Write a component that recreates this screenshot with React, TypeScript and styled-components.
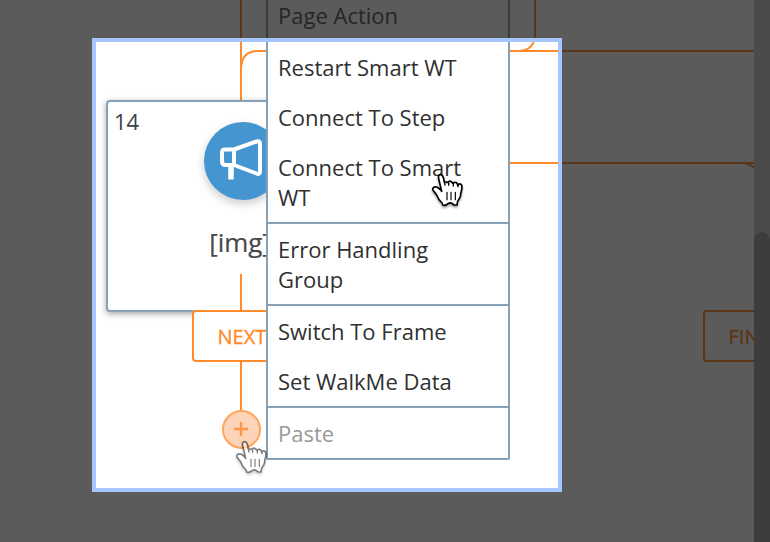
import React from "react";
import styled, { createGlobalStyle } from "styled-components";

const ORANGE = "#ff8b2c";
const STEEL = "#86a1b7";

const GlobalStyle = createGlobalStyle`
  * { box-sizing: border-box; }
  html, body { margin: 0; padding: 0; }
  body { overflow: hidden; font-family: "Open Sans", "Noto Sans", sans-serif; }
`;

const Screen = styled.main`
  position: relative;
  display: grid;
  grid-template-columns: 1fr 16px;
  width: 770px;
  height: 542px;
  overflow: hidden;
  background: #fff;
`;

const Canvas = styled.div`
  position: relative;
  overflow: hidden;
`;

const Connectors = styled.svg`
  position: absolute;
  inset: 0;
  fill: none;
  stroke: ${ORANGE};
  stroke-width: 2;
`;

const StepNode = styled.section`
  position: absolute;
  left: 106px;
  top: 100px;
  width: 274px;
  height: 212px;
  padding: 4px 6px;
  display: flex;
  flex-direction: column;
  align-items: center;
  background: #fff;
  border: 2px solid ${STEEL};
  border-radius: 4px;
  box-shadow: 0 2px 6px rgba(0, 0, 0, 0.35);
`;

const StepNumber = styled.span`
  align-self: flex-start;
  height: 16px;
  font-size: 22px;
  line-height: 30px;
  color: #37424a;
`;

const StepIcon = styled.div`
  flex: none;
  width: 78px;
  height: 78px;
  border-radius: 50%;
  background: #4595d1;
  box-shadow: 0 4px 10px rgba(0, 0, 0, 0.2);
`;

const StepTitle = styled.span`
  margin-top: 24px;
  padding-right: 6px;
  font-size: 26px;
  letter-spacing: -0.1px;
  line-height: 36px;
  color: #484848;
  -webkit-text-stroke: 0.2px #484848;
`;

const Branch = styled.div<{ $x: number; $width: number }>`
  position: absolute;
  left: ${(p) => p.$x}px;
  top: 310px;
  width: ${(p) => p.$width}px;
  height: 52px;
  padding-left: 23.5px;
  display: flex;
  align-items: center;
  background: #fff;
  border: 2px solid ${ORANGE};
  border-radius: 4px;
  color: ${ORANGE};
  font-size: 20px;
  -webkit-text-stroke: 0.35px ${ORANGE};
`;

const AddButton = styled.button`
  position: absolute;
  left: 221.5px;
  top: 409.5px;
  width: 39px;
  height: 39px;
  padding: 0;
  display: grid;
  place-items: center;
  border: 2.5px solid #ffa45b;
  border-radius: 50%;
  background: #fdd4b7;
`;

const Menu = styled.nav`
  position: absolute;
  left: 266px;
  top: -12px;
  width: 244px;
  background: #fff;
  border: 2px solid ${STEEL};
  border-radius: 2px;
`;

const MenuGroup = styled.div`
  & + & { border-top: 2px solid ${STEEL}; }
`;

const MenuItem = styled.div<{ $tone?: string }>`
  padding: 10px;
  font-size: 22px;
  line-height: 30px;
  color: ${(p) => p.$tone ?? "#303030"};
`;

const ScrollTrack = styled.div`
  padding-top: 232px;
  background: #cecece;
`;

const ScrollThumb = styled.div`
  height: 330px;
  border-radius: 8px;
  background: #a3a3a3;
`;

const Spotlight = styled.div`
  position: absolute;
  left: 92px;
  top: 38px;
  width: 470px;
  height: 454px;
  border: 4px solid #a6c6ff;
  box-shadow: 0 0 0 700px rgba(12, 12, 12, 0.675);
`;

const Pointer = styled.svg<{ $x: number; $y: number; $faded?: boolean }>`
  position: absolute;
  left: ${(p) => p.$x}px;
  top: ${(p) => p.$y}px;
  opacity: ${(p) => (p.$faded ? 0.5 : 1)};
  overflow: visible;
  filter: drop-shadow(0 2px 1px rgba(0, 0, 0, 0.35));
`;

const tones: Record<string, string> = { "Page Action": "#5c5c5c", Paste: "#999" };

const menuGroups = [
  ["Page Action"],
  ["Restart Smart WT", "Connect To Step", "Connect To Smart WT"],
  ["Error Handling Group"],
  ["Switch To Frame", "Set WalkMe Data"],
  ["Paste"],
];

function Megaphone() {
  return (
    <svg width="78" height="78" viewBox="0 0 78 78" fill="none" stroke="#fff" strokeWidth="4" strokeLinejoin="round">
      <path d="M30 27.5H21Q18 27.5 18 30.5V39Q18 43 21.5 43H30Z" />
      <path d="M30 27.5L52.5 19.5Q56 18.5 56 21.5V49Q56 53 52.5 51.5L30 43" />
      <path d="M27 43V57.5" strokeWidth="5.5" />
    </svg>
  );
}

function HandPointer({ x, y, faded }: { x: number; y: number; faded?: boolean }) {
  return (
    <Pointer $x={x} $y={y} $faded={faded} width="34" height="36" viewBox="0 0 102 108" fill="#fff" stroke="#000" strokeWidth="5" strokeLinejoin="round" strokeLinecap="round">
      <path d="M35 58Q29 50 22 46Q12 42 8 50Q7 54 14 61Q20 67 23 75Q26 83 32 88Q38 92 38 99Q47 102 54 95Q60 91 66 94L72 99H82Q80 90 87 81Q93 73 92 65Q96 53 96 43Q94 35 87 36L83 40Q82 30 74 31L68 34Q65 26 57 28L51 32Q47 28 43 30Q42 19 38 12Q34 6 28 9Q24 12 26 20Q30 37 35 58Z" />
      <path d="M43 30L45 39M56 32V40M70 33V42M84 38V44" strokeWidth="4" />
      <path d="M51 61V83M63 61V83M76 61V83" strokeWidth="3.5" />
    </Pointer>
  );
}

export default function App() {
  return (
    <>
      <GlobalStyle />
      <Screen>
        <Canvas>
          <Connectors width="754" height="542">
            <path d="M241 0V100M241 362V410" />
            <path d="M241 68Q242 51 258 51H754" />
            <path d="M535 0V35Q534 51 518 51" />
            <path d="M510 163H754M742 163Q749 163 756 169" />
          </Connectors>
          <StepNode>
            <StepNumber>14</StepNumber>
            <StepIcon><Megaphone /></StepIcon>
            <StepTitle>[img]</StepTitle>
          </StepNode>
          <Connectors width="754" height="542">
            <path d="M241 274V310" />
          </Connectors>
          <Branch $x={192} $width={100}>NEXT</Branch>
          <Branch $x={703} $width={114}>FINISH</Branch>
          <AddButton aria-label="Add step">
            <svg width="16" height="16" viewBox="0 0 16 16" stroke="#ff9444" strokeWidth="2.3">
              <path d="M8 1V15M1 8H15" />
            </svg>
          </AddButton>
          <Menu>
            {menuGroups.map((items) => (
              <MenuGroup key={items[0]}>
                {items.map((item) => (
                  <MenuItem key={item} $tone={tones[item]}>{item}</MenuItem>
                ))}
              </MenuGroup>
            ))}
          </Menu>
          <HandPointer x={430} y={172} />
          <HandPointer x={234} y={438.5} faded />
        </Canvas>
        <ScrollTrack><ScrollThumb /></ScrollTrack>
        <Spotlight />
      </Screen>
    </>
  );
}
